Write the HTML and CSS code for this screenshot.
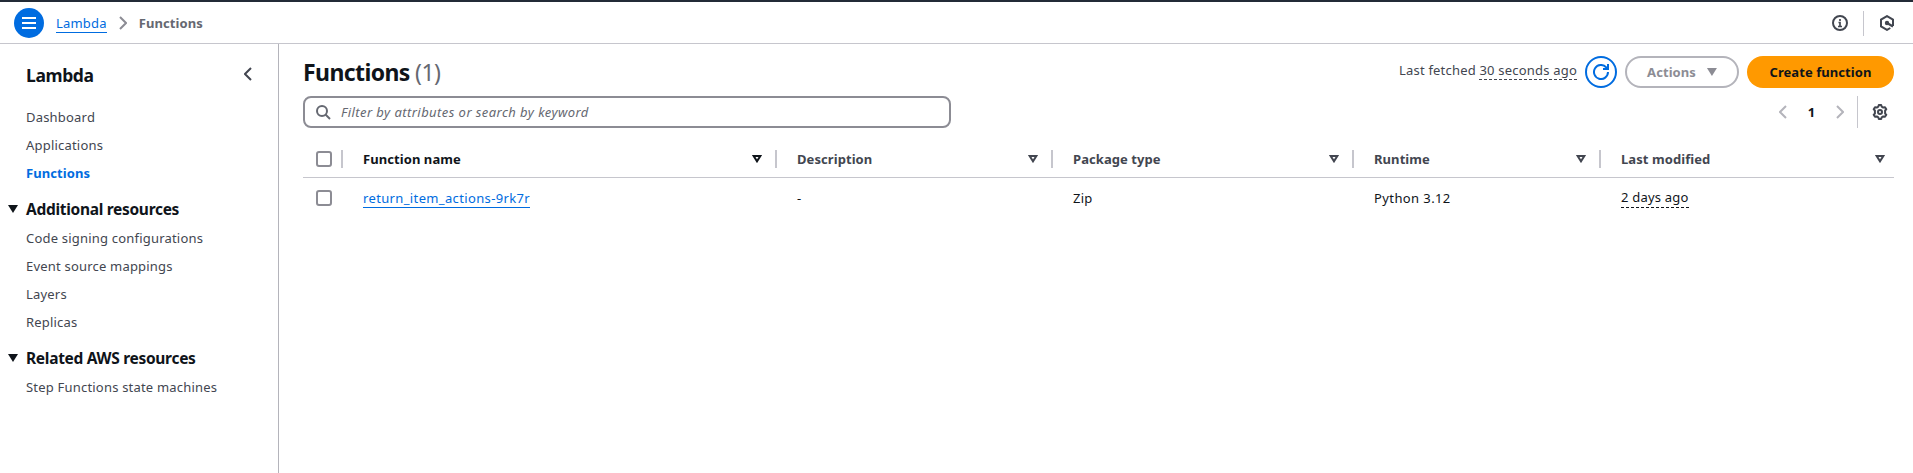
FILE: index.html
```html
<!DOCTYPE html>
<html lang="en">
<head>
<meta charset="utf-8">
<title>Functions - Lambda</title>
<link rel="stylesheet" href="styles.css">
</head>
<body>
<header class="topbar">
  <button class="menu" aria-label="Menu"><svg width="14" height="12" viewBox="0 0 14 12"><path d="M0 1h14M0 6h14M0 11h14" stroke="#fff" stroke-width="2"/></svg></button>
  <nav class="crumbs">
    <a class="link" href="#">Lambda</a>
    <svg class="crumb-sep" width="8" height="14" viewBox="0 0 8 14"><path d="M1 1l6 6-6 6" fill="none" stroke="#8c8c94" stroke-width="2"/></svg>
    <span class="crumb-current bold">Functions</span>
  </nav>
  <div class="tools">
    <svg width="16" height="16" viewBox="0 0 16 16"><circle cx="8" cy="8" r="7" fill="none" stroke="#424650" stroke-width="2"/><path d="M8 4v2M6.500 7.500H8V11M6 11.500h4" fill="none" stroke="#424650" stroke-width="1.700"/></svg>
    <i class="tool-divider"></i>
    <svg width="16" height="16" viewBox="0 0 16 16"><path d="M14 11V4.600L8 1.100 2 4.600v6.800l6 3.500 3.300-1.900" fill="none" stroke="#424650" stroke-width="2"/><path d="M8 8l6 3.500" stroke="#424650" stroke-width="2.200"/><circle cx="8" cy="8" r="2.200" fill="#424650"/></svg>
  </div>
</header>
<div class="shell">
  <aside class="sidebar">
    <div class="side-head"><h2>Lambda</h2><svg width="8" height="14" viewBox="0 0 8 14"><path d="M7 1L1 7l6 6" fill="none" stroke="#424650" stroke-width="2"/></svg></div>
    <ul class="side-list first"><li>Dashboard</li><li>Applications</li><li class="active">Functions</li></ul>
    <h3><i class="caret"></i><span>Additional resources</span></h3>
    <ul class="side-list"><li>Code signing configurations</li><li>Event source mappings</li><li>Layers</li><li>Replicas</li></ul>
    <h3><i class="caret"></i><span>Related AWS resources</span></h3>
    <ul class="side-list"><li>Step Functions state machines</li></ul>
  </aside>
  <main class="main">
    <div class="title-row">
      <h1>Functions <span class="count">(1)</span></h1>
      <div class="actions">
        <p class="fetched"><span>Last fetched</span> <span class="dashed">30 seconds ago</span></p>
        <button class="refresh" aria-label="Refresh"><svg width="16" height="16" viewBox="0 0 16 16"><path d="M15 8a7 7 0 1 1-1.800-4.700L15 5M15 0v5h-5" fill="none" stroke="#006ce0" stroke-width="2"/></svg></button>
        <button class="btn disabled"><span>Actions</span><i class="caret"></i></button>
        <button class="btn primary"><span>Create function</span></button>
      </div>
    </div>
    <div class="filter-row">
      <label class="search"><svg width="16" height="16" viewBox="0 0 16 16"><circle cx="7" cy="7" r="5" fill="none" stroke="#656871" stroke-width="2"/><path d="M10.500 10.500L15 15" stroke="#656871" stroke-width="2"/></svg><span>Filter by attributes or search by keyword</span></label>
      <div class="pager">
        <svg width="8" height="14" viewBox="0 0 8 14"><path d="M7 1L1 7l6 6" fill="none" stroke="#b4b4bb" stroke-width="2"/></svg>
        <b>1</b>
        <svg width="8" height="14" viewBox="0 0 8 14"><path d="M1 1l6 6-6 6" fill="none" stroke="#b4b4bb" stroke-width="2"/></svg>
        <i class="pager-divider"></i>
        <svg width="16" height="16" viewBox="0 0 16 16" fill="none" stroke="#424650" stroke-width="2" stroke-linejoin="round"><path d="M6.300 2.700L6.800 1h2.400l.5 1.700 1.500.9 1.800-.4 1.300 2.100L13.100 6.500v3l1.200 1.200-1.300 2.100-1.800-.4-1.500.9-.5 1.700H6.800l-.5-1.700-1.500-.9-1.800.4-1.300-2.100 1.200-1.200v-3L1.700 5.300 3 3.200l1.800.4z"/><circle cx="8" cy="8" r="2"/></svg>
      </div>
    </div>
    <div class="table">
      <div class="row head">
        <div class="cell check"><i class="box"></i></div>
        <div class="cell sorted"><span>Function name</span><svg class="sort" viewBox="0 0 10 8"><path d="M1.700 1h6.600L5 6.300z"/></svg></div>
        <div class="cell"><span>Description</span><svg class="sort" viewBox="0 0 10 8"><path d="M1.700 1h6.600L5 6.300z"/></svg></div>
        <div class="cell"><span>Package type</span><svg class="sort" viewBox="0 0 10 8"><path d="M1.700 1h6.600L5 6.300z"/></svg></div>
        <div class="cell"><span>Runtime</span><svg class="sort" viewBox="0 0 10 8"><path d="M1.700 1h6.600L5 6.300z"/></svg></div>
        <div class="cell last"><span>Last modified</span><svg class="sort" viewBox="0 0 10 8"><path d="M1.700 1h6.600L5 6.300z"/></svg></div>
      </div>
      <div class="row">
        <div class="cell check"><i class="box"></i></div>
        <div class="cell"><a class="link name" href="#">return_item_actions-9rk7r</a></div>
        <div class="cell"><span>-</span></div>
        <div class="cell"><span>Zip</span></div>
        <div class="cell"><span class="runtime">Python 3.12</span></div>
        <div class="cell"><span class="dashed">2 days ago</span></div>
      </div>
    </div>
  </main>
</div>
</body>
</html>
```
FILE: styles.css
```css
* { box-sizing: border-box; }
body { margin: 0; height: 473px; overflow: hidden; background: #fff; color: #0f141a; font: 13px/20px "Noto Sans", "Open Sans", sans-serif; letter-spacing: .2px; }
h1, h2, h3, p, ul { margin: 0; padding: 0; }
ul { list-style: none; }
button { font: inherit; letter-spacing: inherit; padding: 0; border: 0; }
svg, i { display: block; flex: none; }
.topbar { height: 44px; border-top: 2px solid #232b37; border-bottom: 1px solid #c6c6cd; display: flex; align-items: center; padding: 1px 18px 0 14px; }
.menu { width: 30px; height: 30px; border-radius: 50%; background: #006ce0; display: flex; align-items: center; justify-content: center; }
.crumbs { display: flex; align-items: center; margin-left: 12px; }
.crumb-sep { margin: 0 12px 0 12px; }
.crumb-current { font-weight: 700; color: #656871; }
.bold, .btn, .active, .row.head { letter-spacing: .07px; }
.link { color: #006ce0; text-decoration: none; border-bottom: 1px solid #006ce0; line-height: 18px; }
.link.name { letter-spacing: .36px; margin-top: 1px; }
.tools { margin-left: auto; display: flex; align-items: center; }
.tool-divider { width: 1px; height: 25px; background: #c6c6cd; margin: 0 15px; }
.shell { display: flex; height: 429px; }
.sidebar { width: 279px; border-right: 1px solid #b4b4bb; color: #424650; }
.side-head { display: flex; justify-content: space-between; padding: 20px 26px 0 26px; }
.side-head svg { margin-top: 3px; }
h2 { color: #0f141a; font: 700 17.5px/22px "Noto Sans", sans-serif; letter-spacing: -.4px; }
h3 { display: flex; align-items: center; gap: 8px; padding-left: 8px; margin-top: 12px; height: 20px; font-size: 15.5px; letter-spacing: -.3px; color: #0f141a; }
.side-list { padding: 5px 0 0 26px; }
.side-list.first { padding-top: 17px; }
.side-list li { height: 28px; line-height: 28px; }
.side-list .active { color: #006ce0; font-weight: 700; }
.caret { width: 10px; height: 8px; background: currentColor; clip-path: polygon(0 0, 100% 0, 50% 100%); }
.main { flex: 1; padding: 12px 19px 0 24px; }
.title-row { display: flex; justify-content: space-between; height: 32px; }
h1 { font: 700 23px/32px "Noto Sans", sans-serif; letter-spacing: -.6px; }
.count { color: #656871; font-weight: 400; }
.actions { display: flex; gap: 8px; }
.fetched { color: #424650; line-height: 18px; padding-top: 5px; }
.dashed { border-bottom: 1px dashed currentColor; }
.runtime { letter-spacing: .4px; }
.refresh { width: 32px; height: 32px; border: 2px solid #006ce0; border-radius: 50%; background: #fff; display: flex; align-items: center; justify-content: center; }
.btn { height: 32px; border-radius: 16px; font-weight: 700; display: flex; align-items: center; justify-content: center; }
.disabled { width: 114px; border: 2px solid #b4b4bb; background: #fff; color: #8c8c94; gap: 11px; }
.primary { width: 147px; background: #ff9900; color: #0f141a; }
.filter-row { display: flex; justify-content: space-between; margin-top: 8px; }
.search { width: 648px; height: 32px; border: 2px solid #8c8c94; border-radius: 8px; display: flex; align-items: center; gap: 10px; padding-left: 10px; color: #656871; font-style: italic; letter-spacing: .44px; }
.pager { display: flex; align-items: center; padding-right: 6px; }
.pager b { width: 49px; text-align: center; }
.pager-divider { width: 1px; height: 32px; background: #c6c6cd; margin: 0 14px 0 13px; }
.table { margin-top: 12px; }
.row { display: grid; grid-template-columns: 40px 434px 276px 301px 247px 292px; height: 38px; padding-top: 1px; }
.row.head { border-bottom: 1px solid #c6c6cd; height: 38px; font-weight: 700; color: #424650; padding: 0; }
.cell { display: flex; align-items: center; justify-content: space-between; padding-left: 20px; }
.cell.check { padding-left: 13px; }
.head .cell:not(.last) { background: linear-gradient(#c6c6cd, #c6c6cd) right center / 2px 18px no-repeat; }
.box { width: 16px; height: 16px; border: 2px solid #8c8c94; border-radius: 3px; }
.cell.sorted { color: #0f141a; }
.sort { width: 10px; height: 8px; margin-right: 15px; }
.last .sort { margin-right: 8px; }
.sort path { fill: none; stroke: currentColor; stroke-width: 2; }
```
